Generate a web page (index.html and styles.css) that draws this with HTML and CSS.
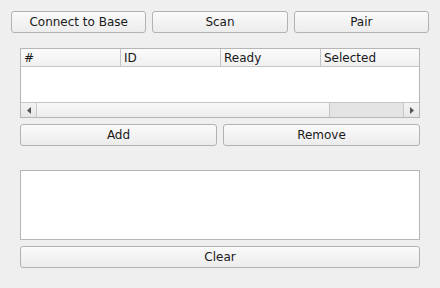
FILE: index.html
```html
<!DOCTYPE html>
<html>
<head>
<meta charset="utf-8">
<link rel="stylesheet" href="styles.css">
</head>
<body>
<div class="window">
  <div class="top-row">
    <button class="btn">Connect to Base</button>
    <button class="btn">Scan</button>
    <button class="btn">Pair</button>
  </div>
  <div class="main">
    <div class="table">
      <div class="thead">
        <div class="th">#</div>
        <div class="th">ID</div>
        <div class="th">Ready</div>
        <div class="th last">Selected</div>
      </div>
      <div class="tbody"></div>
      <div class="hscroll">
        <div class="arrow left"><svg width="4" height="7" viewBox="0 0 4 7"><path d="M4 0 L0 3.5 L4 7 Z" fill="#555"/></svg></div>
        <div class="track">
          <div class="handle"></div>
        </div>
        <div class="arrow right"><svg width="4" height="7" viewBox="0 0 4 7"><path d="M0 0 L4 3.5 L0 7 Z" fill="#555"/></svg></div>
      </div>
    </div>
    <div class="pair-row">
      <button class="btn">Add</button>
      <button class="btn">Remove</button>
    </div>
    <div class="log"></div>
    <button class="btn wide">Clear</button>
  </div>
</div>
</body>
</html>
```
FILE: styles.css
```css
html, body {
  margin: 0;
  padding: 0;
  background: #efefef;
}
body {
  font-family: "DejaVu Sans", sans-serif;
  font-size: 12px;
  color: #1a1a1a;
  width: 440px;
  height: 288px;
  overflow: hidden;
}
.window {
  display: flex;
  flex-direction: column;
}
.btn {
  font-family: "DejaVu Sans", sans-serif;
  font-size: 12px;
  color: #1a1a1a;
  height: 22px;
  padding: 0;
  margin: 0;
  border: 1px solid #b2b2b2;
  border-radius: 3px;
  background: linear-gradient(#fafafa, #ececec);
  box-sizing: border-box;
  line-height: 20px;
}
.top-row {
  display: flex;
  gap: 6px;
  margin: 11px 11px 0 11px;
}
.top-row .btn {
  flex: 1;
}
.main {
  display: flex;
  flex-direction: column;
  margin: 15px 20px 0 20px;
}
.table {
  height: 70px;
  box-sizing: border-box;
  border: 1px solid #b6b6b6;
  background: #fff;
  display: flex;
  flex-direction: column;
}
.thead {
  display: flex;
  height: 17px;
  overflow: hidden;
  border-bottom: 1px solid #c6c6c6;
  background: linear-gradient(#fbfbfb, #f0f0f0);
}
.th {
  width: 100px;
  box-sizing: border-box;
  padding-left: 3px;
  padding-top: 1px;
  line-height: 17px;
  border-right: 1px solid #c6c6c6;
}
.th.last {
  border-right: none;
  flex: 1;
}
.tbody {
  flex: 1;
}
.hscroll {
  height: 14px;
  display: flex;
  border-top: 1px solid #c6c6c6;
  background: #e4e4e4;
}
.arrow {
  width: 15px;
  display: flex;
  align-items: center;
  justify-content: center;
  background: linear-gradient(#f4f4f4, #e6e6e6);
}
.arrow.left {
  border-right: 1px solid #c9c9c9;
}
.arrow.right {
  border-left: 1px solid #c9c9c9;
}
.track {
  flex: 1;
  display: flex;
}
.handle {
  width: 293px;
  box-sizing: border-box;
  border-right: 1px solid #c4c4c4;
  background: linear-gradient(#f8f8f8, #ececec);
}
.pair-row {
  display: flex;
  gap: 6px;
  margin-top: 6px;
}
.pair-row .btn {
  flex: 1;
}
.log {
  margin-top: 24px;
  height: 70px;
  box-sizing: border-box;
  border: 1px solid #b6b6b6;
  background: #fff;
}
.wide {
  margin-top: 6px;
  width: 100%;
}
```
